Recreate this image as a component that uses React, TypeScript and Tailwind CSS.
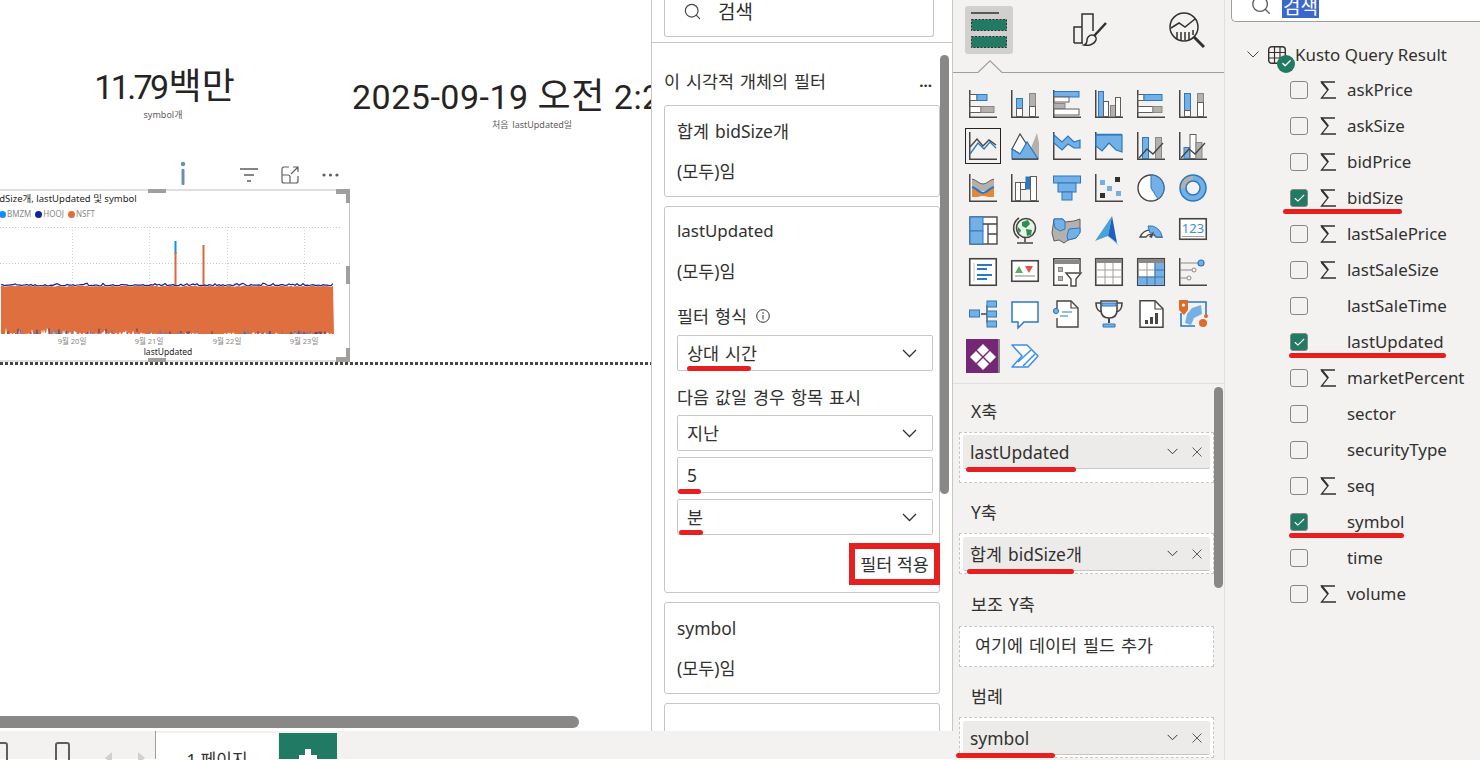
import type { ReactNode } from "react";
import { Check, Search } from "lucide-react";

const DK = "#484644";
const BL = "#2b79c2";
const FL = "#74b0e6";
const GR = "#b3b0ad";

let seed = 11;
const rnd = () => {
  seed = (seed * 16807) % 2147483647;
  return seed / 2147483647;
};

const topPts: string[] = [];
const navyPts: string[] = [];
const botPts: string[] = [];
const navySpikes: string[] = [];
const blueSpikes: string[] = [];
for (let x = 1; x <= 334; x += 2) {
  const y = 285.5 + rnd() * 1.4;
  topPts.push(`${x},${y.toFixed(1)}`);
  navyPts.push(`${x},${(y - 1 - (rnd() > 0.82 ? 1.4 : 0)).toFixed(1)}`);
}
for (let x = 334; x >= 1; x -= 1) {
  const chance = x < 140 ? 0.6 : 0.8;
  const y = rnd() > chance ? 334 - rnd() * (x < 50 ? 7 : x < 140 ? 4 : 2) : 334;
  botPts.push(`${x},${y.toFixed(1)}`);
  if (rnd() > 0.88) navySpikes.push(`M${x} 334V${(332.5 - rnd() * (x < 140 ? 4 : 1.5)).toFixed(1)}`);
  if (rnd() > 0.9) blueSpikes.push(`M${x} 334V${(332 - rnd() * 2).toFixed(1)}`);
}
const orangeArea = [...topPts, ...botPts].join(" ");

const Svg = ({ children }: { children: ReactNode }) => (
  <svg width="28" height="28" viewBox="0 0 28 28" fill="none" className="overflow-visible">
    {children}
  </svg>
);

const Ax = () => <path d="M.75 0V27.25H28" stroke={DK} strokeWidth="1.5" />;
const W = ({ x, y, w, h }: { x: number; y: number; w: number; h: number }) => (
  <rect x={x} y={y} width={w} height={h} fill="#fff" stroke="#605e5c" />
);
const Bl = ({ x, y, w, h }: { x: number; y: number; w: number; h: number }) => (
  <rect x={x} y={y} width={w} height={h} fill={FL} stroke={BL} />
);
const Gy = ({ x, y, w, h }: { x: number; y: number; w: number; h: number }) => (
  <rect x={x} y={y} width={w} height={h} fill={GR} stroke="#8a8886" />
);

const vizIcons: ReactNode[] = [
  <><Ax /><W x={1} y={4.5} w={7} h={6} /><Bl x={8} y={4.5} w={10} h={6} /><W x={1} y={16.5} w={11} h={6} /><Gy x={12} y={16.5} w={13} h={6} /></>,
  <><Ax /><Bl x={5.5} y={8.5} w={6} h={10} /><W x={5.5} y={18.5} w={6} h={8} /><Gy x={18.5} y={3.5} w={6} h={13} /><W x={18.5} y={16.5} w={6} h={10} /></>,
  <><Ax /><Bl x={1} y={1.5} w={25} h={5.5} /><W x={1} y={7} w={15} h={5} /><Gy x={1} y={13.5} w={11} h={5.5} /><W x={1} y={19} w={25} h={6} /></>,
  <><Ax /><Bl x={3.5} y={1.5} w={5} h={25} /><W x={8.5} y={11.5} w={5} h={15} /><Gy x={15.5} y={15.5} w={5} h={11} /><W x={20.5} y={7.5} w={5} h={19} /></>,
  <><Ax /><W x={1} y={4.5} w={6} h={6} /><Bl x={7} y={4.5} w={18} h={6} /><W x={1} y={16.5} w={15} h={6} /><Gy x={16} y={16.5} w={9} h={6} /></>,
  <><Ax /><Bl x={5.5} y={3.5} w={6} h={17} /><W x={5.5} y={20.5} w={6} h={6} /><Gy x={18.5} y={3.5} w={6} h={9} /><W x={18.5} y={12.5} w={6} h={14} /></>,

  <><Ax /><path d="M1 22 9 11l6 6 6-7 6 6" stroke={BL} strokeWidth="1.3" /><path d="M1 15 8 7l6 7 6-6 7 5" stroke={DK} strokeWidth="1.4" /></>,
  <><path d="M20 16 26 1l2 10v16H14z" fill={GR} /><path d="M1 17 9 2l9 14-9 6z" fill="#fff" stroke={DK} strokeWidth="1.2" /><path d="M1 17l8 5 7-12 11 17H1z" fill={FL} stroke={BL} strokeWidth="1.2" /><path d="M1 27.2h26" stroke={DK} strokeWidth="1.4" /></>,
  <><Ax /><path d="M1 3l8 7 6-6 6 6 6-2v8h-6l-6-4-6 6-8-7z" fill={FL} stroke={BL} strokeWidth="1.2" /></>,
  <><Ax /><path d="M1 3h26v17l-6-2-7-7-7 8-6-5z" fill={FL} stroke={BL} strokeWidth="1.2" /><path d="M1 2.5h26" stroke={BL} strokeWidth="1.5" /></>,
  <><Ax /><Bl x={5.5} y={5.5} w={6} h={21} /><Gy x={18.5} y={5.5} w={6} h={21} /><path d="M2 26l8-9 6 5 10-11" stroke={DK} strokeWidth="1.4" /></>,
  <><Ax /><Bl x={5} y={15.5} w={6} h={11} /><W x={11} y={2.5} w={6} h={24} /><Gy x={17} y={10.5} w={6} h={16} /><path d="M2 26l8-9 6 5 10-11" stroke={DK} strokeWidth="1.4" /></>,

  <><Ax /><path d="M3 5c5 1 7 5 11 5s6-4 11-5v9c-5 1-7 3-11 3s-6-2-11-3z" fill={GR} /><path d="M3 14c5 0 7 5 11 5s6-5 11-5v9h-6c-2-1-3-1-5-1s-3 0-5 1H3z" fill="#e3873a" /><path d="M3 13c5 1 7 6 11 6s6-5 11-6" stroke={BL} strokeWidth="2.2" /><path d="M3 5c5 1 7 5 11 5s6-4 11-5" stroke="#605e5c" /></>,
  <><Ax /><W x={4.5} y={8.5} w={5} h={18} /><W x={9.5} y={8.5} w={5} h={7} /><rect x="14.5" y="2.5" width="5" height="13" fill={BL} /><W x={19.5} y={2.5} w={6} h={24} /></>,
  <><Bl x={.5} y={2} w={27} h={7} /><Bl x={5} y={9} w={18} h={9} /><Bl x={9} y={18} w={10} h={8} /></>,
  <><Ax /><rect x="5" y="6" width="5" height="5" fill={FL} /><rect x="20" y="3" width="5" height="5" fill="#323130" /><rect x="12" y="12" width="5" height="5" fill={FL} /><rect x="5" y="19" width="5" height="5" fill="#323130" /><rect x="21" y="17" width="5" height="5" fill={FL} /></>,
  <><circle cx="14" cy="14" r="13" fill="#fff" stroke={DK} strokeWidth="1.4" /><path d="M14 1a13 13 0 0 1 7 24L14 14z" fill={FL} stroke={BL} /></>,
  <><circle cx="14" cy="14" r="10" stroke={FL} strokeWidth="6" /><path d="M14 4a10 10 0 0 0-10 10" stroke={GR} strokeWidth="6" /><circle cx="14" cy="14" r="13" stroke={BL} strokeWidth="1.5" /><circle cx="14" cy="14" r="7" stroke={BL} strokeWidth="1.5" /></>,

  <><rect x="1" y="1" width="27" height="27" fill="#fff" stroke={DK} strokeWidth="1.4" /><rect x="1" y="1" width="13" height="14" fill={FL} stroke={BL} /><rect x="1" y="15" width="13" height="13" fill={FL} stroke={BL} /><path d="M14 8h14M19 8v20M19 18h9" stroke={DK} strokeWidth="1.3" /></>,
  <><circle cx="15" cy="12" r="9.5" fill="#e8f3ea" stroke={DK} strokeWidth="1.6" /><path d="M11 6l6-2 2 4-4 4-4-2zM15 13l6 1-1 5-4 1zM7 11l3 3-1 3-2-2z" fill="#2f8f4e" /><path d="M8 2a12 12 0 0 0 0 20M14 22v4M6 27h16" stroke={DK} strokeWidth="1.6" /></>,
  <><path d="M1 3h9l2 3 9-1 6-2v13l-4 6-8 2-4 3-5-3-5 1-2-8 1-7z" fill={GR} stroke="#605e5c" /><path d="M1 3h9l2 3v7l-5 2-5-3-1-5zM16 13l11-1v5l-4 5-8 2-1-4z" fill={FL} stroke={BL} /></>,
  <><path d="M17 0 0 25l13-5z" fill="#4aa3d6" /><path d="M17 0 13 20l9 7z" fill="#1f5fc4" /><path d="M22 27l2 3-11-10z" fill="#7cc5ea" /></>,
  <><path d="M3 21a12 12 0 0 1 22 0H19a6 6 0 0 0-10 0z" fill="#fff" stroke={DK} strokeWidth="1.3" /><path d="M11 10a12 12 0 0 1 14 11H19a6 6 0 0 0-6-4z" fill={FL} stroke={BL} /><path d="M12 21l5-6-2 7z" fill={DK} /></>,
  <><rect x=".75" y="2.75" width="26.5" height="20.5" fill="#fff" stroke={DK} strokeWidth="1.6" /><text x="14" y="17" textAnchor="middle" fontSize="13" fill="#3c8fd8" fontFamily="'Noto Sans',sans-serif">123</text><path d="M3 20.5h22" stroke="#a19f9d" /></>,

  <><rect x=".75" y=".75" width="26.5" height="26.5" fill="#fff" stroke={DK} strokeWidth="1.6" /><path d="M5 5v18" stroke="#c8c6c4" /><path d="M8 7h15M8 11h10M8 17h15M8 21h10" stroke={BL} strokeWidth="1.8" /></>,
  <><rect x=".75" y="2.75" width="26.5" height="20.5" fill="#fff" stroke={DK} strokeWidth="1.6" /><path d="M4 15l4-7 4 7z" fill="#5aab6a" /><path d="M14 8h8l-4 7z" fill="#e0524a" /><path d="M4 18h20" stroke="#8a8886" /></>,
  <><path d="M27 14V1H1v26h14" fill="#fff" /><path d="M27 14V.75H.75v26.5H15" stroke={DK} strokeWidth="1.5" /><path d="M1 4h26" stroke="#8a8886" strokeWidth="4" /><rect x="5.5" y="9.5" width="4" height="4" fill={GR} stroke="#8a8886" /><rect x="5.5" y="18.5" width="4" height="4" fill={GR} stroke="#8a8886" /><path d="M13 15h15l-5 6v7h-5v-7z" fill="#fff" stroke={DK} strokeWidth="1.4" /></>,
  <><rect x=".75" y=".75" width="26.5" height="26.5" fill="#fff" stroke={DK} strokeWidth="1.6" /><path d="M1 3h26" stroke="#8a8886" strokeWidth="4" /><path d="M1 12h26M1 19h26M10 5v22M18 5v22" stroke="#a19f9d" /></>,
  <><rect x=".75" y=".75" width="26.5" height="26.5" fill="#fff" stroke={DK} strokeWidth="1.6" /><path d="M1 3h26" stroke="#8a8886" strokeWidth="4" /><path d="M18 5h9v22H1v-8h17z" fill={FL} /><path d="M1 12h26M1 19h26M10 5v22M18 5v22" stroke="#a19f9d" /><path d="M1 19h26M10 19v8M18 5v22M18 12h9" stroke={BL} /></>,
  <><path d="M.75 0V27.25H28" stroke={DK} strokeWidth="1.5" /><path d="M1 5h21M1 12h13M1 20h8" stroke="#8a8886" /><circle cx="22" cy="5" r="3" fill={FL} stroke={BL} strokeWidth="1.2" /><circle cx="15" cy="12" r="2" fill="#fff" stroke="#8a8886" /><circle cx="10" cy="20" r="2" fill="#fff" stroke="#8a8886" /></>,

  <><path d="M12 14h6M18 5v18M18 5h2M18 14h2M18 23h2" stroke={DK} strokeWidth="1.3" /><Bl x={.5} y={10} w={10} h={7} /><Bl x={18} y={1} w={9.5} h={6} /><Bl x={18} y={11} w={9.5} h={6} /><Bl x={18} y={21} w={9.5} h={6} /></>,
  <path d="M1 2h26v20H13l-6 6v-6H1z" fill="#fff" stroke={BL} strokeWidth="1.5" />,
  <><path d="M4 9V1h14l7 7v19H4v-9" fill="#fff" stroke={DK} strokeWidth="1.4" /><path d="M18 1v7h7" stroke={DK} strokeWidth="1.2" /><circle cx="3" cy="11" r="2.6" fill={FL} stroke={BL} /><path d="M9 12h10M7 16h8" stroke={BL} strokeWidth="1.2" /></>,
  <><path d="M6 1h16v9c0 5-3 8-8 8s-8-3-8-8z" fill="#fff" stroke={DK} strokeWidth="1.6" /><path d="M6 3H1c0 6 2 8 6 9M22 3h5c0 6-2 8-6 9" stroke={DK} strokeWidth="1.6" /><path d="M7 3h14v3H7z" fill={FL} stroke={BL} /><path d="M14 18v5" stroke={DK} strokeWidth="2" /><path d="M8 24h12v3H8z" fill={FL} stroke={BL} /></>,
  <><path d="M3 .75h15l8 8v18.5H3z" fill="#fff" stroke={DK} strokeWidth="1.5" /><path d="M18 1v8h8" stroke={DK} strokeWidth="1.2" /><rect x="8" y="20" width="3" height="4" fill={DK} /><rect x="13" y="17" width="3" height="7" fill={DK} /><rect x="18" y="13" width="3" height="11" fill={DK} /></>,
  <><path d="M2 2h25v16" stroke={BL} strokeWidth="1.6" /><path d="M2 13v13h14" stroke={BL} strokeWidth="1.6" /><path d="M13 8l9-3 1 9-8 4-3 7-6-2 2-9z" fill={FL} /><path d="M0 0h9v10l-4 5-5-5z" fill="#dc6d2a" /><circle cx="4.5" cy="5" r="1.6" fill="#fff" /><circle cx="24" cy="23" r="4" fill="#dc6d2a" /><circle cx="27" cy="16" r="2" fill="#dc6d2a" /></>,

  <><rect x="-3" y="-3" width="34" height="34" fill="#742774" /><rect x="29" y="-3" width="2" height="34" fill="#8a8886" /><path d="M14 2l6 6-6 6-6-6zM7 9l6 6-6 6-6-6zM21 9l6 6-6 6-6-6zM14 16l6 6-6 6-6-6z" fill="#fff" /></>,
  <><path d="M1 3h15l11 11-10 11H1l10-11z" fill="#fff" stroke="#3c8fe8" strokeWidth="1.5" strokeLinejoin="round" /><path d="M7 20 20 8M12 24 24 12" stroke="#3c8fe8" strokeWidth="1.5" /></>,
];

const fields = [
  { name: "askPrice", sigma: true },
  { name: "askSize", sigma: true },
  { name: "bidPrice", sigma: true },
  { name: "bidSize", sigma: true, checked: true, mark: "left-[58px] w-[119px] top-[29px]" },
  { name: "lastSalePrice", sigma: true },
  { name: "lastSaleSize", sigma: true },
  { name: "lastSaleTime" },
  { name: "lastUpdated", checked: true, mark: "left-[64px] w-[157px] top-[29px]" },
  { name: "marketPercent", sigma: true },
  { name: "sector" },
  { name: "securityType" },
  { name: "seq", sigma: true },
  { name: "symbol", checked: true, mark: "left-[64px] w-[115px] top-[29px]" },
  { name: "time" },
  { name: "volume", sigma: true },
];

const Mark = ({ className }: { className: string }) => (
  <span className={`absolute h-[5px] rounded-full bg-[#e81f1f] ${className}`} />
);

const Chevron = ({ className = "" }: { className?: string }) => (
  <svg width="15" height="9" viewBox="0 0 15 9" fill="none" className={className}>
    <path d="M1 1l6.5 6.5L14 1" stroke="#323130" strokeWidth="1.3" />
  </svg>
);

const Sigma = () => (
  <svg width="16" height="18" viewBox="0 0 16 18" fill="none">
    <path d="M15 1H1.5L8 8.8 1.5 17H16" stroke="#323130" strokeWidth="1.3" />
    <path d="M1.5 1 8 8.8" stroke="#323130" strokeWidth="2" />
  </svg>
);

const SelectBox = ({ label, mark }: { label: string; mark?: string }) => (
  <div className="relative flex h-[36px] items-center justify-between rounded-[2px] border border-[#c8c6c4] pl-[9px] pr-[15px]">
    <span>{label}</span>
    <Chevron />
    {mark && <Mark className={mark} />}
  </div>
);

const FilterCard = ({ title, className }: { title: string; className: string }) => (
  <div className={`rounded-[3px] border border-[#c8c6c4] pl-[12px] pt-[5px] ${className}`}>
    <div className="flex h-[40px] items-center">{title}</div>
    <div className="flex h-[40px] items-center">(모두)임</div>
  </div>
);

const FieldChip = ({ label, mark }: { label: string; mark: string }) => (
  <div className="relative flex h-[34px] items-center rounded-[2px] border-b border-[#c8c6c4] bg-[#edebe9] pl-[7px]">
    <span className="flex-1">{label}</span>
    <Chevron className="mr-[12px] scale-75" />
    <svg width="10" height="10" viewBox="0 0 10 10" className="mr-[8px]">
      <path d="M.5.5l9 9M9.5.5l-9 9" stroke="#605e5c" />
    </svg>
    <Mark className={mark} />
  </div>
);

const WellLabel = ({ text, className }: { text: string; className: string }) => (
  <div className={`flex h-[24px] items-center pl-[12px] ${className}`}>{text}</div>
);

const Handle = ({ className }: { className: string }) => (
  <span className={`absolute bg-[#a19f9d] ${className}`} />
);

function ReportCanvas() {
  return (
    <div className="flex h-full w-[651px] flex-col overflow-hidden bg-white">
      <div className="flex h-[160px] shrink-0 items-start">
        <div className="mt-[66px] flex w-[326px] shrink-0 flex-col items-center">
          <div className="h-[42px] whitespace-nowrap pl-[3px] font-['Roboto','Noto_Sans_CJK_KR',sans-serif] text-[34px] leading-[42px] text-[#252423] [word-spacing:0]">
            <span className="tracking-[-2.6px]">11.79</span>
            <span className="ml-[2px] text-[36px]">백만</span>
          </div>
          <div className="h-[14px] text-[9px] leading-[14px] text-[#605e5c]">symbol개</div>
        </div>
        <div className="ml-[26px] mt-[76px] flex w-[360px] shrink-0 flex-col">
          <div className="h-[42px] whitespace-nowrap font-['Roboto','Noto_Sans_CJK_KR',sans-serif] text-[34px] leading-[42px] tracking-[.5px] text-[#252423] [word-spacing:0]">
            2025-09-19 <span className="text-[36px]">오전</span> 2:27:43
          </div>
          <div className="h-[14px] text-center text-[9px] leading-[14px] text-[#605e5c]">처음 lastUpdated일</div>
        </div>
      </div>

      <div className="flex h-[29px] shrink-0 items-center">
        <svg width="6" height="24" viewBox="0 0 6 24" className="ml-[180px] mb-[4px]">
          <circle cx="3" cy="3" r="2.2" fill="#6a8db0" />
          <rect x="1.5" y="8" width="3" height="16" rx="1" fill="#6a8db0" />
        </svg>
        <svg width="18" height="14" viewBox="0 0 18 14" className="ml-[54px]" fill="none">
          <path d="M0 1h18M4 7h10M7 13h4" stroke="#605e5c" strokeWidth="1.3" />
        </svg>
        <svg width="18" height="18" viewBox="0 0 18 18" className="ml-[23px]" fill="none">
          <path d="M8 1H3a2 2 0 0 0-2 2v12a2 2 0 0 0 2 2h12a2 2 0 0 0 2-2v-5M1 9h6a2 2 0 0 1 2 2v6M10 8l7-7M12 1h5v5" stroke="#605e5c" strokeWidth="1.2" />
        </svg>
        <svg width="17" height="4" viewBox="0 0 17 4" className="ml-[23px]">
          <circle cx="2" cy="2" r="1.6" fill="#605e5c" />
          <circle cx="8.5" cy="2" r="1.6" fill="#605e5c" />
          <circle cx="15" cy="2" r="1.6" fill="#605e5c" />
        </svg>
      </div>

      <div className="relative h-[173px] w-[350px] shrink-0 border-y-2 border-r border-y-[#e1dfdd] border-r-[#c8c6c4] [word-spacing:0]">
        <div className="-ml-[29px] h-[15px] whitespace-nowrap text-[9.5px] leading-[15px] text-[#252423]">
          합계 bidSize개, lastUpdated 및 symbol
        </div>
        <div className="mt-[1px] flex h-[14px] items-center text-[8px] text-[#8a8886]">
          <span className="-ml-[1px] h-[7px] w-[7px] rounded-full bg-[#118dff]" />
          <span className="ml-[1px]">BMZM</span>
          <span className="ml-[4px] h-[7px] w-[7px] rounded-full bg-[#12239e]" />
          <span className="ml-[1px]">HOOJ</span>
          <span className="ml-[4px] h-[7px] w-[7px] rounded-full bg-[#e66c37]" />
          <span className="ml-[1px]">NSFT</span>
        </div>
        <svg width="350" height="140" viewBox="0 220 350 140" className="absolute left-0 top-[29px]">
          <path d="M0 227.5H340M0 263.5H340" stroke="#c8c6c4" strokeDasharray="1 2" />
          <path d="M72.5 227V334M149.5 227V334M227.5 227V334M304.5 227V334" stroke="#d8d6d4" strokeDasharray="1 2" />
          <path d="M175.5 241V254" stroke="#118dff" strokeWidth="2" />
          <path d="M175.5 252V286" stroke="#d9683a" strokeWidth="2" />
          <path d="M203.5 245V286" stroke="#d9683a" strokeWidth="2" />
          <polyline points={navyPts.join(" ")} fill="none" stroke="#12239e" strokeWidth="1.2" />
          <polygon points={orangeArea} fill="#df6f3e" />
          <path d={blueSpikes.join("")} stroke="#118dff" strokeWidth=".8" />
          <path d={navySpikes.join("")} stroke="#12239e" strokeWidth=".8" />
          <text x="72" y="344" textAnchor="middle" fontSize="7.5" fill="#8a8886">9월 20일</text>
          <text x="149" y="344" textAnchor="middle" fontSize="7.5" fill="#8a8886">9월 21일</text>
          <text x="227" y="344" textAnchor="middle" fontSize="7.5" fill="#8a8886">9월 22일</text>
          <text x="304" y="344" textAnchor="middle" fontSize="7.5" fill="#8a8886">9월 23일</text>
          <text x="168" y="355" textAnchor="middle" fontSize="8.5" fill="#252423">lastUpdated</text>
        </svg>
        <Handle className="left-[148px] -top-[2px] h-[4px] w-[18px]" />
        <Handle className="left-[148px] -bottom-[2px] h-[4px] w-[18px]" />
        <Handle className="-right-[1px] top-[75px] h-[18px] w-[4px]" />
        <Handle className="-right-[1px] -top-[2px] h-[5px] w-[14px]" />
        <Handle className="-right-[1px] -top-[2px] h-[14px] w-[4px]" />
        <Handle className="-bottom-[2px] -right-[1px] h-[5px] w-[14px]" />
        <Handle className="-bottom-[2px] -right-[1px] h-[14px] w-[4px]" />
      </div>

      <div className="h-[3px] shrink-0 bg-[repeating-linear-gradient(90deg,#484644_0_3px,transparent_3px_5px)]" />
      <div className="flex-1" />
      <div className="mb-[3px] h-[12px] w-[579px] shrink-0 rounded-r-full bg-[#8a8886]" />
    </div>
  );
}

function FilterPane() {
  return (
    <div className="flex h-full w-[302px] flex-col overflow-hidden border-l border-r border-[#c8c6c4] bg-white">
      <div className="h-[43px] shrink-0 border-b border-[#c8c6c4] pl-[12px]">
        <div className="flex h-[37px] w-[270px] items-center rounded-b-[3px] border border-t-0 border-[#c8c6c4] pb-[13px] pl-[18px]">
          <Search size={19} strokeWidth={1.5} color="#484644" />
          <span className="ml-[16px] text-[19px]">검색</span>
        </div>
      </div>
      <div className="flex min-h-0 flex-1">
        <div className="w-[288px] pl-[12px]">
          <div className="mb-[12px] mt-[26px] flex h-[24px] w-[276px] items-center justify-between pr-[8px]">
            <span>이 시각적 개체의 필터</span>
            <span className="text-[15px] font-bold leading-none">...</span>
          </div>
          <FilterCard title="합계 bidSize개" className="h-[92px] w-[276px]" />
          <div className="mt-[9px] flex h-[387px] w-[276px] flex-col rounded-[3px] border border-[#c8c6c4] pl-[12px] pr-[6px] pt-[4px]">
            <div className="flex h-[40px] shrink-0 items-center text-[16.9px]">lastUpdated</div>
            <div className="flex h-[40px] shrink-0 items-center">(모두)임</div>
            <div className="mt-[13px] flex h-[24px] shrink-0 items-center">
              필터 형식
              <svg width="14" height="14" viewBox="0 0 14 14" fill="none" className="ml-[9px]">
                <circle cx="7" cy="7" r="6.3" stroke="#323130" />
                <path d="M7 6v4.5" stroke="#323130" />
                <circle cx="7" cy="4" r=".8" fill="#323130" />
              </svg>
            </div>
            <div className="mt-[7px]">
              <SelectBox label="상대 시간" mark="left-[9px] top-[30px] w-[64px]" />
            </div>
            <div className="mt-[14px] flex h-[24px] shrink-0 items-center">다음 값일 경우 항목 표시</div>
            <div className="mt-[6px]">
              <SelectBox label="지난" />
            </div>
            <div className="relative mt-[6px] flex h-[36px] items-center rounded-[2px] border border-[#c8c6c4] pl-[9px]">
              5
              <Mark className="left-0 top-[31px] w-[23px]" />
            </div>
            <div className="mt-[6px]">
              <SelectBox label="분" mark="left-[1px] top-[30px] w-[24px]" />
            </div>
            <button className="-mr-[7px] mt-[8px] flex h-[42px] w-[91px] items-center justify-center self-end border-[6px] border-[#e81f1f] bg-white">
              <span className="whitespace-nowrap">필터 적용</span>
            </button>
          </div>
          <FilterCard title="symbol" className="mt-[9px] h-[92px] w-[276px]" />
          <div className="mt-[9px] h-[60px] w-[276px] rounded-[3px] border border-[#c8c6c4]" />
        </div>
        <div className="mt-[12px] h-[439px] w-[9px] rounded-full bg-[#8a8886]" />
      </div>
    </div>
  );
}

function PageTabs() {
  return (
    <div className="flex h-[28px] shrink-0 items-end bg-[#f3f2f1]">
      <div className="flex h-full w-[156px] items-start border-r border-[#a19f9d] pt-[11px]">
        <span className="-ml-[8px] h-[24px] w-[16px] rounded-[3px] border-2 border-[#605e5c]" />
        <span className="ml-[47px] h-[24px] w-[15px] rounded-[3px] border-2 border-[#605e5c]" />
        <span className="ml-[35px] mt-[10px] h-0 w-0 border-y-[6px] border-r-[7px] border-y-transparent border-r-[#d2d0ce]" />
        <span className="ml-[26px] mt-[10px] h-0 w-0 border-y-[6px] border-l-[7px] border-y-transparent border-l-[#d2d0ce]" />
      </div>
      <div className="h-[26px] w-[122px] bg-white pt-[15px] text-center text-[17px] leading-[24px] [word-spacing:0]">1 페이지</div>
      <div className="ml-[1px] flex h-[26px] w-[58px] justify-center bg-[#217a63] pt-[16px]">
        <span className="relative h-[18px] w-[18px]">
          <span className="absolute left-[6px] top-0 h-[18px] w-[6px] bg-white" />
          <span className="absolute left-0 top-[6px] h-[6px] w-[18px] bg-white" />
        </span>
      </div>
    </div>
  );
}

function VizPane() {
  return (
    <div className="flex h-full w-[271px] shrink-0 flex-col overflow-hidden bg-[#f3f2f1]">
      <div className="flex h-[60px] shrink-0 items-start pl-[12px] pt-[6px]">
        <div className="flex h-[48px] w-[48px] items-center justify-center rounded-[3px] bg-[#d2d0ce]">
          <svg width="36" height="36" viewBox="0 0 36 36" fill="none">
            <path d="M0 1h28" stroke="#323130" strokeWidth="1.5" />
            <rect x=".5" y="7.5" width="35" height="11" fill="#217a63" stroke="#323130" strokeDasharray="2 1.5" />
            <rect x=".5" y="24.5" width="35" height="11" fill="#217a63" stroke="#323130" strokeDasharray="2 1.5" />
          </svg>
        </div>
        <div className="ml-[53px] flex h-[48px] w-[48px] items-center justify-center">
          <svg width="34" height="36" viewBox="0 0 34 36" fill="none" stroke="#323130" strokeWidth="1.5">
            <path d="M1 31V15h8M9 31V2h11v17" />
            <path d="M1 31h9" />
            <path d="M33 11 21 24" strokeWidth="2.5" />
            <path d="M19 23c3 0 5 3 4 5-2 5-8 6-12 5 3-1 3-3 3-5s2-5 5-5z" fill="#f3f2f1" />
          </svg>
        </div>
        <div className="ml-[49px] flex h-[48px] w-[48px] items-center justify-center">
          <svg width="36" height="36" viewBox="0 0 36 36" fill="none" stroke="#323130" strokeWidth="1.5">
            <circle cx="15" cy="15" r="14" />
            <path d="M2 16l8-5 6 4 10-8" />
            <path d="M8 20v7M12 20v8M16 20v8M20 20v8M24 18v5" />
            <path d="M25 25l10 10" strokeWidth="3" />
          </svg>
        </div>
      </div>
      <svg width="271" height="14" viewBox="0 0 271 14" className="shrink-0" fill="none">
        <path d="M0 12.5H25L37 .8 49 12.5H271" stroke="#a19f9d" strokeWidth="1.2" />
      </svg>
      <div className="h-[310px] shrink-0 border-b border-[#e1dfdd] pl-[16px] pt-[16px]">
        <div className="grid grid-cols-[repeat(6,28px)] gap-[14px]">
          {vizIcons.map((icon, i) => (
            <div key={i} className={i === 6 ? "h-[28px] w-[28px] outline outline-offset-[3px] outline-[#252423]" : "h-[28px] w-[28px]"}>
              <Svg>{icon}</Svg>
            </div>
          ))}
        </div>
      </div>
      <div className="flex min-h-0 flex-1">
        <div className="w-[261px] pl-[6px] pt-[15px]">
          <WellLabel text="X축" className="" />
          <div className="mt-[9px] h-[51px] w-[255px] border border-dashed border-[#c8c6c4] bg-white px-[3px] pt-[2px]">
            <FieldChip label="lastUpdated" mark="left-[3px] top-[32px] w-[110px]" />
          </div>
          <WellLabel text="Y축" className="mt-[17px]" />
          <div className="mt-[9px] h-[41px] w-[255px] border border-dashed border-[#c8c6c4] bg-white px-[3px] pt-[3px]">
            <FieldChip label="합계 bidSize개" mark="left-[4px] top-[32px] w-[107px]" />
          </div>
          <WellLabel text="보조 Y축" className="mt-[18px]" />
          <div className="mt-[10px] flex h-[41px] w-[255px] items-center border border-dashed border-[#c8c6c4] bg-white pb-[4px] pl-[15px]">
            여기에 데이터 필드 추가
          </div>
          <WellLabel text="범례" className="mt-[17px]" />
          <div className="mt-[9px] h-[41px] w-[255px] border border-dashed border-[#c8c6c4] bg-white px-[3px] pt-[3px]">
            <FieldChip label="symbol" mark="-left-[7px] top-[32px] w-[99px]" />
          </div>
        </div>
        <div className="mt-[3px] h-[201px] w-[9px] rounded-full bg-[#8a8886]" />
      </div>
    </div>
  );
}

function DataPane() {
  return (
    <div className="h-full w-[256px] shrink-0 overflow-hidden border-l border-[#e1dfdd] bg-[#f3f2f1] text-[16.9px] [word-spacing:0]">
      <div className="ml-[6px] flex h-[22px] items-end rounded-bl-[5px] border-b border-l border-[#a19f9d] bg-white">
        <div className="mb-[5px] ml-[18px]">
          <Search size={22} strokeWidth={1.5} color="#605e5c" />
        </div>
        <span className="mb-[3px] ml-[10px] bg-[#3a66d0] px-[1px] text-[19px] leading-[22px] text-white">검색</span>
      </div>
      <div className="mt-[15px] flex h-[35px] items-center">
        <svg width="12" height="7" viewBox="0 0 12 7" fill="none" className="ml-[22px]">
          <path d="M.5.5 6 6l5.5-5.5" stroke="#484644" />
        </svg>
        <span className="relative ml-[9px] h-[18px] w-[18px] shrink-0">
          <svg width="18" height="18" viewBox="0 0 18 18" fill="none">
            <rect x=".7" y=".7" width="16.6" height="16.6" rx="3" stroke="#323130" strokeWidth="1.4" />
            <path d="M1 6.5h16M1 12h16M6.5 1v16M12 1v16" stroke="#323130" strokeWidth="1.2" />
          </svg>
          <span className="absolute left-[9px] top-[9px] flex h-[18px] w-[18px] items-center justify-center rounded-full bg-[#217a63]">
            <Check size={11} strokeWidth={3} color="#fff" />
          </span>
        </span>
        <span className="ml-[9px] whitespace-nowrap">Kusto Query Result</span>
      </div>
      {fields.map((f) => (
        <div key={f.name} className="relative flex h-[36px] items-center">
          {f.checked ? (
            <span className="ml-[65px] flex h-[18px] w-[18px] items-center justify-center rounded-[3px] border border-[#8a8886] bg-[#217a63]">
              <Check size={13} strokeWidth={2} color="#fff" />
            </span>
          ) : (
            <span className="ml-[65px] h-[18px] w-[18px] rounded-[3px] border border-[#8a8886]" />
          )}
          <span className="ml-[12px] flex h-[18px] w-[16px] items-center">{f.sigma && <Sigma />}</span>
          <span className="ml-[11px] whitespace-nowrap">{f.name}</span>
          {f.mark && <Mark className={f.mark} />}
        </div>
      ))}
    </div>
  );
}

export default function App() {
  return (
    <div className="flex h-[760px] w-[1480px] overflow-hidden bg-white font-['Noto_Sans','Noto_Sans_CJK_KR',sans-serif] text-[17.4px] leading-[24px] text-[#323130] [word-spacing:1.5px]">
      <div className="flex h-full w-[953px] shrink-0 flex-col">
        <div className="flex h-[731px] shrink-0">
          <ReportCanvas />
          <FilterPane />
        </div>
        <PageTabs />
      </div>
      <VizPane />
      <DataPane />
    </div>
  );
}
